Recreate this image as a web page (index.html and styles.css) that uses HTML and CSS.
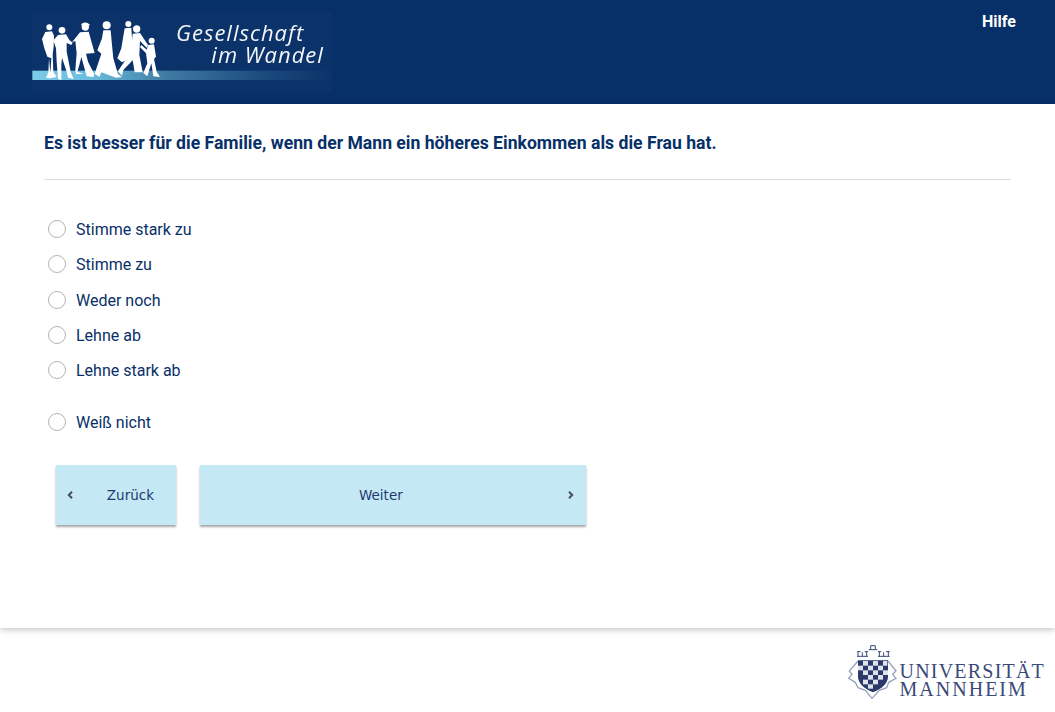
FILE: index.html
```html
<!DOCTYPE html>
<html lang="de">
<head>
<meta charset="utf-8">
<title>Gesellschaft im Wandel</title>
<link rel="stylesheet" href="styles.css">
</head>
<body>
<header class="site-header">
  <svg class="logo" viewBox="96 36 900 240" role="img" aria-label="Gesellschaft im Wandel">
    <defs>
      <linearGradient id="band" x1="0" x2="1" y1="0" y2="0">
        <stop offset="0" stop-color="#7ccbe7"/>
        <stop offset="0.2" stop-color="#68bcdc"/>
        <stop offset="0.45" stop-color="#3f7ba3"/>
        <stop offset="0.75" stop-color="#1d4d80"/>
        <stop offset="1" stop-color="#0c3369"/>
      </linearGradient>
    </defs>
    <rect x="96" y="36" width="900" height="240" fill="#0b3269"/>
    <rect x="97" y="212" width="900" height="28" fill="url(#band)"/>
    <g fill="#fff" transform="translate(108 45)">
      <circle cx="40" cy="37" r="9"/>
      <path d="M28 51 L48 49 L54 62 L53 95 L50 118 L52 170 L62 186 L42 190 L30 188 L37 172 L39 130 L43 176 L46 130 L34 125 L25 100 L18 72 Z"/>
      <circle cx="78" cy="46" r="10"/>
      <path d="M66 60 L90 58 L100 75 L110 83 L106 90 L92 84 L92 110 L104 170 L113 192 L96 188 L92 170 L78 128 L76 150 L76 195 L66 192 L62 140 L60 100 L52 76 Z"/>
      <circle cx="148" cy="36" r="11"/>
      <path d="M136 27 Q148 19 158 26 L163 31 L137 32 Z"/>
      <path d="M132 52 L158 50 L176 114 L150 116 L156 140 L175 178 L172 186 L152 184 L136 126 L130 150 L124 170 L142 176 L120 178 L118 165 L122 115 L118 78 L108 82 Z"/>
      <circle cx="212" cy="31" r="12"/>
      <path d="M202 46 L224 46 L228 90 L232 130 L246 178 L258 186 L240 188 L196 172 L190 186 L176 176 L196 116 L184 106 L198 70 Z"/>
      <circle cx="277" cy="27" r="9"/>
      <path d="M266 40 L286 38 L290 100 L282 130 L258 142 L244 130 L256 100 Z"/>
      <circle cx="302" cy="42" r="11"/>
      <path d="M290 56 L312 54 L336 90 L332 98 L312 78 L310 120 L320 172 L296 172 L290 136 L262 165 L258 182 L246 168 L268 136 L284 115 Z"/>
      <circle cx="347" cy="77" r="9"/>
      <path d="M336 90 L354 88 L360 125 L354 132 L362 170 L372 186 L352 184 L346 145 L334 184 L322 174 L334 145 L330 115 L312 96 L316 90 L332 104 Z"/>
    </g>
    <g class="logo-text" fill="#f2f5f9">
      <text x="528" y="122">Gesellschaft</text>
      <text x="634" y="189">im Wandel</text>
    </g>
  </svg>
  <a class="help" href="#">Hilfe</a>
</header>

<main class="content">
  <h1 class="question">Es ist besser für die Familie, wenn der Mann ein höheres Einkommen als die Frau hat.</h1>
  <form class="answers">
    <div class="scale">
      <label class="option"><span class="radio"></span>Stimme stark zu</label>
      <label class="option"><span class="radio"></span>Stimme zu</label>
      <label class="option"><span class="radio"></span>Weder noch</label>
      <label class="option"><span class="radio"></span>Lehne ab</label>
      <label class="option"><span class="radio"></span>Lehne stark ab</label>
    </div>
    <label class="option dont-know"><span class="radio"></span>Weiß nicht</label>
    <div class="nav">
      <button type="button" class="btn btn-back">
        <svg class="chev" viewBox="0 0 6 8"><path d="M5 0.8 L1.8 4 L5 7.2"/></svg>
        <span>Zurück</span>
      </button>
      <button type="button" class="btn btn-next">
        <span>Weiter</span>
        <svg class="chev" viewBox="0 0 6 8"><path d="M1 0.8 L4.2 4 L1 7.2"/></svg>
      </button>
    </div>
  </form>
</main>

<footer class="site-footer">
  <div class="uni">
    <svg class="crest" viewBox="17 15 150 165" aria-hidden="true">
      <g fill="none" stroke="#3a4a78" stroke-width="3">
        <path d="M47 52 H80 M50 52 V36 M76 52 V36 M48 38 H58 M70 38 H80 M63 40 V52"/>
        <path d="M110 52 H145 M114 52 V36 M141 52 V36 M110 38 H120 M134 38 H145 M127 40 V52"/>
        <path d="M82 32 H108 M88 32 V20 H102 V32"/>
      </g>
      <path d="M50 66 L24 96 L32 106 L22 118 L42 130 L50 146 L72 154 L92 178 L114 154 L136 146 L142 130 L164 118 L154 106 L164 96 L140 66" fill="none" stroke="#9aa3bb" stroke-width="4"/>
      <path d="M50 64 H140 V112 Q140 142 95 160 Q50 142 50 112 Z" fill="#2b3a6b"/>
      <g fill="#dfe3ec">
        <rect x="65" y="66" width="15" height="14"/>
        <rect x="95" y="66" width="15" height="14"/>
        <rect x="125" y="66" width="13" height="14"/>
        <rect x="50" y="80" width="15" height="14"/>
        <rect x="80" y="80" width="15" height="14"/>
        <rect x="110" y="80" width="15" height="14"/>
        <rect x="65" y="94" width="15" height="14"/>
        <rect x="95" y="94" width="15" height="14"/>
        <rect x="125" y="94" width="15" height="14"/>
        <rect x="80" y="108" width="15" height="14"/>
        <rect x="110" y="108" width="15" height="14"/>
        <rect x="65" y="122" width="15" height="14"/>
        <rect x="95" y="122" width="15" height="14"/>
        <rect x="80" y="136" width="15" height="13"/>
      </g>
    </svg>
    <div class="uni-name">
      <span>UNIVERSITÄT</span>
      <span class="uni-second">MANNHEIM</span>
    </div>
  </div>
</footer>
</body>
</html>
```

FILE: styles.css
```css
* { box-sizing: border-box; }

html, body {
  margin: 0;
  padding: 0;
}

body {
  width: 1055px;
  height: 712px;
  overflow: hidden;
  background: #fff;
  font-family: Roboto, "Liberation Sans", sans-serif;
  color: #083068;
}

.site-header {
  height: 104px;
  background: #083068;
  display: flex;
  justify-content: space-between;
  align-items: flex-start;
  padding: 12px 39px 0 32px;
}

.logo {
  display: block;
  width: 300px;
  height: 80px;
  filter: blur(0.35px);
}

.logo-text text {
  font-family: "Open Sans", sans-serif;
  font-style: italic;
  font-weight: 400;
  font-size: 66px;
  letter-spacing: 3px;
}

.help {
  color: #fff;
  font-weight: 700;
  font-size: 16px;
  line-height: 19px;
  text-decoration: none;
}

.content {
  height: 524px;
  padding: 0 44px;
  position: relative;
  z-index: 1;
  background: #fff;
  box-shadow: 0 2px 6px rgba(0, 0, 0, 0.22);
}

.question {
  margin: 0;
  padding: 28px 0 25px;
  font-size: 17.6px;
  line-height: 22px;
  font-weight: 700;
  color: #083068;
  border-bottom: 1px solid #dcdcdc;
  width: 967px;
}

.answers {
  padding: 32.1px 0 0 4px;
}

.scale {
  display: flex;
  flex-direction: column;
}

.option {
  display: flex;
  align-items: center;
  gap: 10px;
  height: 35.2px;
  font-size: 16px;
  color: #083068;
}

.dont-know {
  margin-top: 17px;
}

.radio {
  width: 18px;
  height: 18px;
  margin-top: -1px;
  border: 1px solid #b4b4b4;
  border-radius: 50%;
  background: #fff;
  flex: none;
}

.nav {
  display: flex;
  gap: 24px;
  margin: 25px 0 0 8px;
}

.btn {
  height: 60px;
  border: 0;
  padding: 0 12px 0 11px;
  background: #c5e8f5;
  box-shadow: 0 2px 2px rgba(0, 0, 0, 0.35);
  display: flex;
  align-items: center;
  justify-content: space-between;
  font-family: "DejaVu Sans", sans-serif;
  font-size: 13.5px;
  color: #1c3a6e;
}

.btn-back {
  width: 120px;
  padding-right: 22px;
}

.btn-next {
  width: 386px;
  padding-left: 159px;
}

.chev {
  width: 6px;
  height: 8px;
  flex: none;
}

.chev path {
  fill: none;
  stroke: #4a4f58;
  stroke-width: 2;
}

.site-footer {
  height: 84px;
  display: flex;
  justify-content: flex-end;
  padding: 16px 10px 0 0;
}

.uni {
  display: flex;
  align-items: flex-start;
}

.crest {
  width: 50px;
  height: 55px;
  margin-right: 3px;
  flex: none;
  filter: blur(0.3px);
}

.uni-name {
  display: flex;
  flex-direction: column;
  margin-top: 18px;
  font-family: "Liberation Serif", serif;
  font-size: 20px;
  line-height: 18px;
  letter-spacing: 1.2px;
  color: #3a4a78;
}

.uni-second {
  letter-spacing: 2px;
}
```
